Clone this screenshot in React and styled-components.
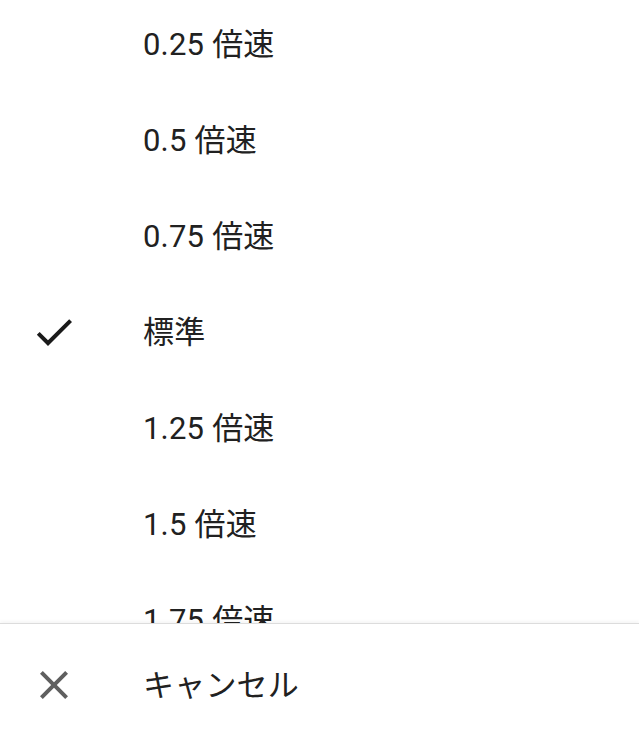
import React from 'react'
import styled, { createGlobalStyle } from 'styled-components'

const speeds = [
  { label: '0.25 倍速' },
  { label: '0.5 倍速' },
  { label: '0.75 倍速' },
  { label: '標準', selected: true },
  { label: '1.25 倍速' },
  { label: '1.5 倍速' },
  { label: '1.75 倍速' },
]

function CheckIcon() {
  return (
    <svg viewBox="0 0 24 24" width="48" height="48" fill="#1a1a1a">
      <path d="M9 16.17L4.83 12l-1.42 1.41L9 19 21 7l-1.41-1.41z" />
    </svg>
  )
}

function CloseIcon() {
  return (
    <svg viewBox="0 0 24 24" width="48" height="48" fill="#5f5f5f">
      <path d="M19 6.41L17.59 5 12 10.59 6.41 5 5 6.41 10.59 12 5 17.59 6.41 19 12 13.41 17.59 19 19 17.59 13.41 12z" />
    </svg>
  )
}

export default function App() {
  return (
    <>
      <GlobalStyle />
      <Sheet>
        <ScrollArea>
          <List>
            {speeds.map((s) => (
              <Row key={s.label}>
                <IconSlot>{s.selected && <CheckIcon />}</IconSlot>
                <Label>{s.label}</Label>
              </Row>
            ))}
          </List>
        </ScrollArea>
        <Footer>
          <Row>
            <IconSlot><CloseIcon /></IconSlot>
            <Label>キャンセル</Label>
          </Row>
        </Footer>
      </Sheet>
    </>
  )
}

const GlobalStyle = createGlobalStyle`
  html, body {
    margin: 0;
    padding: 0;
    background: #fff;
  }
  body {
    font-family: Roboto, "Noto Sans CJK JP", sans-serif;
    color: #212121;
  }
`

const Sheet = styled.div`
  width: 639px;
  height: 750px;
  display: flex;
  flex-direction: column;
  background: #fff;
  overflow: hidden;
`

const ScrollArea = styled.div`
  height: 623px;
  overflow: hidden;
  flex-shrink: 0;
`

const List = styled.div`
  display: flex;
  flex-direction: column;
  margin-top: -4px;
`

const Row = styled.div`
  height: 96px;
  display: flex;
  align-items: center;
  padding-left: 30px;
`

const IconSlot = styled.div`
  width: 48px;
  height: 48px;
  margin-right: 65px;
  display: flex;
  svg {
    display: block;
  }
`

const Label = styled.span`
  font-size: 31px;
  line-height: 1;
  color: #212121;
  letter-spacing: 0.2px;
`

const Footer = styled.div`
  flex: 1;
  border-top: 1px solid #dcdcdc;
  box-shadow: 0 -2px 3px rgba(0, 0, 0, 0.04);
  padding-top: 13px;
`
